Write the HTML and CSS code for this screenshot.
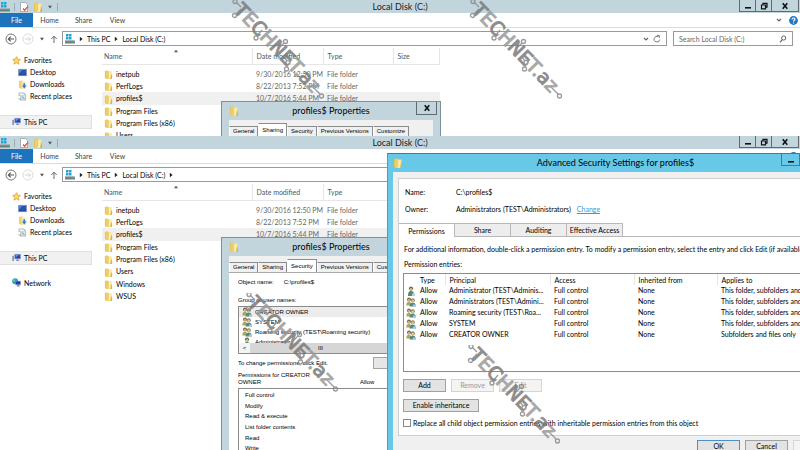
FILE: index.html
```html
<!DOCTYPE html>
<html lang="en">
<head>
<meta charset="utf-8">
<title>Local Disk (C:)</title>
<link rel="stylesheet" href="styles.css">
</head>
<body>
<svg class="defs" aria-hidden="true">
  <symbol id="drive" viewBox="0 0 10 10"><path fill="#1aa6d6" d="M1 0h2.500v2.500H1zM4 0h2.500v2.500H4zM1 3h2.500v2.500H1zM4 3h2.500v2.500H4z"/><path fill="#6f7d84" d="M0 6h9l1 1.500V9.500H0z"/><path fill="#aab5ba" d="M0 6h9l1 1.300H0z"/><path fill="#39c46a" d="M7.500 8h1.500v.8H7.500z"/></symbol>
  <symbol id="folder" viewBox="0 0 10 10"><path fill="#e3c35c" d="M1 1l3-.8V10L1 9z"/><path fill="#f8e49c" d="M4 1.500h4.500V10H4z"/><path fill="#eccf6c" d="M2 1h3.500v8L4 10H2z"/><path fill="#fff6cf" d="M5.500 2.500h1V9h-1z"/><path fill="#d9b548" d="M8 5h1v5H7z"/></symbol>
  <symbol id="page" viewBox="0 0 10 10"><path fill="#fff" stroke="#8d979b" stroke-width=".7" d="M1.500.5h5l2 2v7h-7z"/><path fill="none" stroke="#d8553c" stroke-width="1.300" d="M4 6.500l1.600 1.700L9 4.500"/></symbol>
  <symbol id="star" viewBox="0 0 10 10"><path fill="#ffd665" stroke="#df9a2b" stroke-width=".8" d="M5 .7l1.300 2.800 3.100.4-2.300 2.100.6 3.100L5 7.600 2.300 9.100l.6-3.100L.6 3.900l3.100-.4z"/></symbol>
  <symbol id="desktop" viewBox="0 0 10 10"><path fill="#2b56a8" stroke="#7f98c4" stroke-width=".7" d="M.5 1.500h9v7h-9z"/><path fill="#4e8ad4" d="M1 2h4L1 6z"/><path fill="#1b3f80" d="M1 7.300h8V8H1z"/></symbol>
  <symbol id="down" viewBox="0 0 10 10"><path fill="#ecd17a" d="M1 1l4-.8V10L1 9z"/><path fill="#f8e7ae" d="M4 1.500h4V10H4z"/><path fill="#2f7fc9" d="M6 3.500h2V6h1.700L7 9.500 4.300 6H6z"/></symbol>
  <symbol id="recent" viewBox="0 0 10 10"><path fill="#eef3f6" stroke="#8e9da8" stroke-width=".7" d="M1 1h6v2h1.500v6H3V4H1z"/><path stroke="#7f93a3" stroke-width=".7" d="M4 4.500h3M4 6h3M4 7.500h4"/><path fill="none" stroke="#5d7c96" d="M1 7l2 2"/></symbol>
  <symbol id="pc" viewBox="0 0 10 10"><path fill="#2544b0" stroke="#95a5cf" stroke-width=".7" d="M3 1.500h6.500v5H3z"/><path fill="#6e88dc" d="M4 2h4L4 5z"/><path fill="#8c97ad" d="M.3 3h1.900v6H.3zM5 7h2l1.500 2h-4z"/></symbol>
  <symbol id="network" viewBox="0 0 10 10"><circle cx="3.500" cy="3.500" r="3.300" fill="#2c97c9"/><path fill="#6fce86" d="M2 1l2 1-1 2-2 0zM4 4l2 0-1 2z"/><path fill="#1e3fa4" stroke="#8796c4" stroke-width=".6" d="M4 3.500h5.500v4H4z"/><path fill="#8290ad" d="M6 7.500h2l.8 2H5z"/></symbol>
  <symbol id="user" viewBox="0 0 10 10"><circle cx="5" cy="2.600" r="2.100" fill="#7b6a45"/><circle cx="5" cy="3.300" r="1.300" fill="#d5b78a"/><path fill="#4f8b76" d="M2 10c0-4 1-5 3-5s3 1 3 5z"/><path fill="#b9cfdf" d="M6 7.500h3V10H6z"/></symbol>
  <symbol id="users" viewBox="0 0 10 10"><circle cx="3" cy="2.500" r="2" fill="#7d6b42"/><circle cx="3" cy="3" r="1.100" fill="#ddc08f"/><circle cx="6.800" cy="3.200" r="2" fill="#93804f"/><circle cx="6.800" cy="3.700" r="1.200" fill="#e3c99b"/><path fill="#b3a258" d="M.3 8.500C.3 5.500 1.300 4.700 3 4.700s2 1 2 3.800z"/><path fill="#508c84" d="M3.500 9.600c0-3 1.300-4 3.200-4s3 1 3 4z"/><path fill="#a9cbe6" d="M7 7.500h2.800V10H7z"/></symbol>
  <symbol id="back" viewBox="0 0 12 12"><circle cx="6" cy="6" r="5" fill="#fff" stroke="#777"/><path fill="none" stroke="#555" stroke-width="1.200" d="M9 6H3.500M5.700 3.700L3.400 6l2.300 2.300"/></symbol>
  <symbol id="forward" viewBox="0 0 12 12"><circle cx="6" cy="6" r="5" fill="#fff" stroke="#dcdcdc"/><path fill="none" stroke="#d5d5d5" d="M3 6h5.500M6.300 3.700L8.600 6 6.300 8.300"/></symbol>
  <symbol id="up" viewBox="0 0 8 8"><path fill="none" stroke="#666" d="M4 8V1.200M1.300 4L4 1.200 6.700 4"/></symbol>
  <symbol id="tri-right" viewBox="0 0 4 6"><path fill="#222" d="M.8.8L3.600 3 .8 5.200z"/></symbol>
  <symbol id="tri-down" viewBox="0 0 6 4"><path fill="#555" d="M1 .8h4L3 3.500z"/></symbol>
  <symbol id="tri-up" viewBox="0 0 6 4"><path fill="#555" d="M1 3.200h4L3 .8z"/></symbol>
  <symbol id="chevron" viewBox="0 0 6 6"><path fill="none" stroke="#666" stroke-width="1.200" d="M1 2l2 2 2-2"/></symbol>
  <symbol id="refresh" viewBox="0 0 8 8"><path fill="none" stroke="#777" d="M6.700 4.600A2.800 2.800 0 1 1 5.300 1.700M4 .6h2.300v2.300"/></symbol>
  <symbol id="search" viewBox="0 0 8 8"><circle cx="4.700" cy="3" r="2.100" fill="none" stroke="#666"/><path stroke="#666" stroke-width="1.200" d="M3.300 4.700L1 7.300"/></symbol>
  <symbol id="help" viewBox="0 0 9 9"><circle cx="4.500" cy="4.500" r="4.400" fill="#1f78c1"/><path fill="none" stroke="#fff" stroke-width="1.100" d="M3 3.500c0-2 3-2 3-.2 0 1-1.500 1-1.500 2.200M4.500 6.500v1"/></symbol>
  <symbol id="min" viewBox="0 0 8 8"><path stroke="#111" stroke-width="1.600" d="M1 5.800h6"/></symbol>
  <symbol id="restore" viewBox="0 0 8 8"><path fill="none" stroke="#111" stroke-width="1.200" d="M1.500 3h4v3.800h-4zM3 3V1.300h4v3.800H5.600"/></symbol>
  <symbol id="close" viewBox="0 0 8 8"><path stroke="#111" stroke-width="1.600" d="M1.700 1.300l4.600 5.400M6.300 1.300L1.700 6.700"/></symbol>
  <symbol id="stamp" viewBox="0 0 100 108">
    <g fill="none" stroke="#8a8a8a" stroke-width="1.300">
      <path d="M6 2l5 5M6 14l5-5M27 36l5-6M54 43l-5 5M57 61l-3-4M57 67l4-7M90 94l-8-8"/>
      <circle cx="5" cy="1.500" r="2"/><circle cx="4.500" cy="15.500" r="2"/><circle cx="26" cy="38" r="2"/><circle cx="55.500" cy="41.500" r="2"/><circle cx="58" cy="62.500" r="2"/><circle cx="56.500" cy="69" r="2"/><circle cx="91.500" cy="96" r="2"/>
    </g>
    <text class="stamp-text" transform="translate(3 11) rotate(46)">T<tspan class="pale">E</tspan>C<tspan class="pale">H</tspan>NE<tspan class="pale">T.</tspan>a<tspan class="pale">z</tspan></text>
  </symbol>
</svg>

<main class="desktop">
  <section class="window">
    <header class="titlebar">
      <div class="quick"><svg class="i10"><use href="#drive"/></svg><span class="rule"></span><svg class="i10"><use href="#page"/></svg><svg class="i10"><use href="#folder"/></svg><svg class="i6"><use href="#tri-down"/></svg><span class="rule"></span></div>
      <h1>Local Disk (C:)</h1>
      <div class="controls"><button aria-label="Minimize"><svg class="i8"><use href="#min"/></svg></button><button aria-label="Restore"><svg class="i8"><use href="#restore"/></svg></button><button class="wide" aria-label="Close"><svg class="i8"><use href="#close"/></svg></button></div>
    </header>
    <nav class="ribbon"><button class="file">File</button><button>Home</button><button>Share</button><button>View</button><span class="grow"></span><svg class="i6"><use href="#chevron"/></svg><svg class="i9"><use href="#help"/></svg></nav>
    <div class="address">
      <div class="arrows"><svg class="i12"><use href="#back"/></svg><svg class="i12"><use href="#forward"/></svg><svg class="i6"><use href="#tri-down"/></svg><svg class="i8"><use href="#up"/></svg></div>
      <div class="crumbs"><svg class="i10"><use href="#drive"/></svg><svg class="sep"><use href="#tri-right"/></svg><a href="#pc">This PC</a><svg class="sep"><use href="#tri-right"/></svg><a href="#c">Local Disk (C:)</a><span class="grow"></span><svg class="i6"><use href="#chevron"/></svg><svg class="i8"><use href="#refresh"/></svg></div>
      <div class="search"><input type="text" aria-label="Search Local Disk (C:)" placeholder="Search Local Disk (C:)"><svg class="i8"><use href="#search"/></svg></div>
    </div>
    <div class="content">
      <ul class="tree">
        <li><svg class="i9"><use href="#star"/></svg>Favorites</li>
        <li class="child"><svg class="i9"><use href="#desktop"/></svg>Desktop</li>
        <li class="child"><svg class="i9"><use href="#down"/></svg>Downloads</li>
        <li class="child"><svg class="i9"><use href="#recent"/></svg>Recent places</li>
        <li class="pc current"><svg class="i9"><use href="#pc"/></svg>This PC</li>
      </ul>
      <div class="listing">
        <svg class="sort"><use href="#tri-up"/></svg>
        <table class="files">
          <thead><tr><th class="c-name">Name</th><th class="c-date">Date modified</th><th class="c-type">Type</th><th class="c-size">Size</th></tr></thead>
          <tbody>
            <tr><td><svg class="i9"><use href="#folder"/></svg>inetpub</td><td>9/30/2016 12:50 PM</td><td>File folder</td><td></td></tr>
            <tr><td><svg class="i9"><use href="#folder"/></svg>PerfLogs</td><td>8/22/2013 7:52 PM</td><td>File folder</td><td></td></tr>
            <tr class="selected"><td><svg class="i9"><use href="#folder"/></svg>profiles$</td><td>10/7/2016 5:44 PM</td><td>File folder</td><td></td></tr>
            <tr><td><svg class="i9"><use href="#folder"/></svg>Program Files</td><td></td><td></td><td></td></tr>
            <tr><td><svg class="i9"><use href="#folder"/></svg>Program Files (x86)</td><td></td><td></td><td></td></tr>
            <tr><td><svg class="i9"><use href="#folder"/></svg>Users</td><td></td><td></td><td></td></tr>
          </tbody>
        </table>
      </div>
    </div>
    <section class="dialog props">
      <header><svg class="i10"><use href="#folder"/></svg><h2>profiles$ Properties</h2><button aria-label="Close"><svg class="i8"><use href="#close"/></svg></button></header>
      <div class="props-body">
        <div class="tabs"><button>General</button><button class="on">Sharing</button><button>Security</button><button>Previous Versions</button><button>Customize</button></div>
        <div class="pane"></div>
      </div>
    </section>
    <svg class="stamp stamp-left"><use href="#stamp"/></svg>
    <svg class="stamp stamp-right"><use href="#stamp"/></svg>
  </section>

  <section class="window">
    <header class="titlebar">
      <div class="quick"><svg class="i10"><use href="#drive"/></svg><span class="rule"></span><svg class="i10"><use href="#page"/></svg><svg class="i10"><use href="#folder"/></svg><svg class="i6"><use href="#tri-down"/></svg><span class="rule"></span></div>
      <h1>Local Disk (C:)</h1>
      <div class="controls"><button aria-label="Minimize"><svg class="i8"><use href="#min"/></svg></button><button aria-label="Restore"><svg class="i8"><use href="#restore"/></svg></button><button class="wide" aria-label="Close"><svg class="i8"><use href="#close"/></svg></button></div>
    </header>
    <nav class="ribbon"><button class="file">File</button><button>Home</button><button>Share</button><button>View</button><span class="grow"></span><svg class="i9"><use href="#help"/></svg></nav>
    <div class="address">
      <div class="arrows"><svg class="i12"><use href="#back"/></svg><svg class="i12"><use href="#forward"/></svg><svg class="i6"><use href="#tri-down"/></svg><svg class="i8"><use href="#up"/></svg></div>
      <div class="crumbs"><svg class="i10"><use href="#drive"/></svg><svg class="sep"><use href="#tri-right"/></svg><a href="#pc">This PC</a><svg class="sep"><use href="#tri-right"/></svg><a href="#c">Local Disk (C:)</a><svg class="sep"><use href="#tri-right"/></svg></div>
    </div>
    <div class="content">
      <ul class="tree">
        <li><svg class="i9"><use href="#star"/></svg>Favorites</li>
        <li class="child"><svg class="i9"><use href="#desktop"/></svg>Desktop</li>
        <li class="child"><svg class="i9"><use href="#down"/></svg>Downloads</li>
        <li class="child"><svg class="i9"><use href="#recent"/></svg>Recent places</li>
        <li class="pc current"><svg class="i9"><use href="#pc"/></svg>This PC</li>
        <li class="net"><svg class="i9"><use href="#network"/></svg>Network</li>
      </ul>
      <div class="listing">
        <svg class="sort"><use href="#tri-up"/></svg>
        <table class="files">
          <thead><tr><th class="c-name">Name</th><th class="c-date">Date modified</th><th class="c-type">Type</th><th class="c-size"></th></tr></thead>
          <tbody>
            <tr><td><svg class="i9"><use href="#folder"/></svg>inetpub</td><td>9/30/2016 12:50 PM</td><td>File folder</td><td></td></tr>
            <tr><td><svg class="i9"><use href="#folder"/></svg>PerfLogs</td><td>8/22/2013 7:52 PM</td><td>File folder</td><td></td></tr>
            <tr class="selected"><td><svg class="i9"><use href="#folder"/></svg>profiles$</td><td>10/7/2016 5:44 PM</td><td>File folder</td><td></td></tr>
            <tr><td><svg class="i9"><use href="#folder"/></svg>Program Files</td><td></td><td></td><td></td></tr>
            <tr><td><svg class="i9"><use href="#folder"/></svg>Program Files (x86)</td><td></td><td></td><td></td></tr>
            <tr><td><svg class="i9"><use href="#folder"/></svg>Users</td><td></td><td></td><td></td></tr>
            <tr><td><svg class="i9"><use href="#folder"/></svg>Windows</td><td></td><td></td><td></td></tr>
            <tr><td><svg class="i9"><use href="#folder"/></svg>WSUS</td><td></td><td></td><td></td></tr>
          </tbody>
        </table>
      </div>
    </div>

    <section class="dialog props">
      <header><svg class="i10"><use href="#folder"/></svg><h2>profiles$ Properties</h2></header>
      <div class="props-body">
        <div class="tabs"><button>General</button><button>Sharing</button><button class="on">Security</button><button>Previous Versions</button><button>Customize</button></div>
        <div class="pane">
          <p class="object"><span>Object name:</span><span>C:\profiles$</span></p>
          <p class="group">Group or user names:</p>
          <div class="principals">
            <ul>
              <li class="selected"><svg class="i10"><use href="#users"/></svg>CREATOR OWNER</li>
              <li><svg class="i10"><use href="#users"/></svg>SYSTEM</li>
              <li><svg class="i10"><use href="#users"/></svg>Roaming security (TEST\Roaming security)</li>
              <li><svg class="i10"><use href="#user"/></svg>Administrator</li>
            </ul>
            <div class="hscroll"><span class="less">&lt;</span><span class="thumb">III</span></div>
          </div>
          <div class="change"><span>To change permissions, click Edit.</span><button aria-label="Edit permissions"></button></div>
          <div class="perm-head"><span>Permissions for CREATOR OWNER</span><span>Allow</span></div>
          <ul class="perms"><li>Full control</li><li>Modify</li><li>Read &amp; execute</li><li>List folder contents</li><li>Read</li><li>Write</li></ul>
        </div>
      </div>
    </section>

    <section class="dialog advanced">
      <header><svg class="i10"><use href="#folder"/></svg><h2>Advanced Security Settings for profiles$</h2><button aria-label="Minimize"><svg class="i8"><use href="#min"/></svg></button></header>
      <div class="adv-body">
        <div class="sheet">
          <dl><dt>Name:</dt><dd>C:\profiles$</dd><dt>Owner:</dt><dd>Administrators (TEST\Administrators)<a href="#change">Change</a></dd></dl>
          <div class="adv-tabs"><button class="on">Permissions</button><button>Share</button><button>Auditing</button><button>Effective Access</button></div>
          <div class="adv-pane">
            <p>For additional information, double-click a permission entry. To modify a permission entry, select the entry and click Edit (if available).</p>
            <p>Permission entries:</p>
            <div class="entries">
              <table>
                <thead><tr><th class="e-icon"></th><th class="e-type">Type</th><th class="e-who">Principal</th><th class="e-acc">Access</th><th class="e-inh">Inherited from</th><th>Applies to</th></tr></thead>
                <tbody>
                  <tr><td><svg class="i10"><use href="#user"/></svg></td><td>Allow</td><td>Administrator (TEST\Adminis...</td><td>Full control</td><td>None</td><td>This folder, subfolders and files</td></tr>
                  <tr><td><svg class="i10"><use href="#users"/></svg></td><td>Allow</td><td>Administrators (TEST\Admini...</td><td>Full control</td><td>None</td><td>This folder, subfolders and files</td></tr>
                  <tr><td><svg class="i10"><use href="#users"/></svg></td><td>Allow</td><td>Roaming security (TEST\Roa...</td><td>Full control</td><td>None</td><td>This folder, subfolders and files</td></tr>
                  <tr><td><svg class="i10"><use href="#users"/></svg></td><td>Allow</td><td>SYSTEM</td><td>Full control</td><td>None</td><td>This folder, subfolders and files</td></tr>
                  <tr><td><svg class="i10"><use href="#users"/></svg></td><td>Allow</td><td>CREATOR OWNER</td><td>Full control</td><td>None</td><td>Subfolders and files only</td></tr>
                </tbody>
              </table>
            </div>
            <div class="actions"><button>Add</button><button disabled>Remove</button><button disabled>Edit</button></div>
            <div class="actions"><button class="inherit">Enable inheritance</button></div>
            <label class="replace"><input type="checkbox">Replace all child object permission entries with inheritable permission entries from this object</label>
          </div>
        </div>
        <footer class="actions"><button class="default">OK</button><button>Cancel</button><button disabled aria-label="Apply"></button></footer>
      </div>
    </section>
    <svg class="stamp stamp-low-left"><use href="#stamp"/></svg>
    <svg class="stamp stamp-low-right"><use href="#stamp"/></svg>
  </section>
</main>
</body>
</html>
```

FILE: styles.css
```css
* { box-sizing: border-box; }
body, h1, h2, p, ul, dl, dd { margin: 0; padding: 0; }
ul { list-style: none; }
body { font: 7px/12px Lato, "Open Sans", sans-serif; color: #000; background: #fff; }
button { font: inherit; color: inherit; margin: 0; padding: 0; border: 0; background: none; }
a { color: inherit; text-decoration: none; }
svg { flex: none; }
.defs { position: absolute; width: 0; height: 0; }
.grow { flex: 1; }
.i6 { width: 6px; height: 6px; }
.i8 { width: 8px; height: 8px; }
.i9 { width: 9px; height: 9px; }
.i10 { width: 10px; height: 10px; }
.i12 { width: 12px; height: 12px; }

.desktop { display: grid; grid-template-rows: 136px 1fr; height: 100vh; overflow: hidden; }
.window { position: relative; overflow: hidden; background: #fff; min-width: 0; }

.titlebar { display: grid; grid-template-columns: 1fr auto 1fr; height: 13px; background: #c2d5dc; }
.quick { display: flex; align-items: center; gap: 4px; }
.quick .rule { width: 1px; height: 8px; background: #98a9b0; }
.titlebar h1 { font-size: 9px; font-weight: 400; line-height: 13px; color: #222; }
.controls { display: flex; justify-content: flex-end; padding-right: 1px; }
.controls button { display: flex; align-items: center; justify-content: center; width: 16px; height: 12px; border: 1px solid #5d6a70; border-top: 0; border-right: 0; }
.controls .wide { width: 28px; border-right: 1px solid #5d6a70; }

.ribbon { display: flex; align-items: center; height: 15px; padding-right: 2px; gap: 7px; border-bottom: 1px solid #dcdcdc; color: #444; }
.ribbon button { width: 27px; height: 14px; }
.ribbon .file { width: 33px; margin-right: -4px; background: #1d74bd; color: #fff; }

.address { display: flex; gap: 6px; height: 20px; padding: 3px 7px 2px 5px; }
.arrows { display: flex; align-items: center; gap: 5px; width: 51px; }
.crumbs { display: flex; align-items: center; flex: 1; gap: 4px; padding: 0 5px 0 2px; border: 1px solid #9a9a9a; }
.sep { width: 4px; height: 6px; }
.search { display: flex; align-items: center; width: 120px; padding: 0 5px; border: 1px solid #9a9a9a; }
.search input { flex: 1; min-width: 0; padding: 0; border: 0; outline: 0; background: none; font: inherit; }
.search input::placeholder { color: #666; opacity: 1; }

.content { display: flex; }
.tree { display: grid; grid-template-rows: repeat(8, 1fr); height: 99px; width: 92px; margin-top: 6px; flex: none; }
.tree li { display: flex; align-items: center; gap: 3px; padding-left: 12px; }
.tree .child { padding-left: 18px; }
.tree .pc { grid-row: 6; }
.tree .net { grid-row: 8; }
.current { background: #f1f1f1; border: 1px solid #e0e0e0; border-left: 0; }
.listing { position: relative; flex: 1; padding-left: 10px; }
.sort { position: absolute; left: 81px; top: 1px; width: 6px; height: 4px; }
.files { width: 338px; border-collapse: collapse; table-layout: fixed; }
.files th { height: 16px; padding: 1px 0 0 4px; text-align: left; font-weight: 400; color: #4c5663; border-right: 1px solid #e6e6e6; border-bottom: 1px solid #e6e6e6; }
.c-name { width: 150px; }
.c-date { width: 71px; }
.c-type { width: 70px; }
.files tbody::before { content: ""; display: block; height: 3px; }
.files td { height: 12px; padding: 0 0 0 4px; white-space: nowrap; color: #666; }
.files tr:nth-child(3n) td { height: 13px; }
.files td:first-child { padding-left: 2px; color: #000; }
.files th:first-child { padding-left: 2px; }
.files td svg { vertical-align: middle; margin-right: 3px; }
.files .selected { background: #f0f0f0; }

.dialog { position: absolute; }
.dialog header { display: flex; align-items: center; }
.dialog h2 { flex: 1; font-weight: 400; text-align: center; }
.dialog header button { display: flex; align-items: center; justify-content: center; align-self: flex-start; }

.props { left: 221px; top: 101px; width: 220px; padding: 0 7px; background: #c2d5dc; border: 1px solid #7f9098; font-family: "Liberation Sans", sans-serif; font-size: 6px; }
.props header { height: 18px; font-family: Lato, "Open Sans", sans-serif; }
.props h2 { font-size: 9px; padding-right: 10px; }
.props header button { width: 21px; height: 13px; margin: 0 -4px 0 -17px; border: 1px solid #5d6a70; border-top: 0; }
.props-body { background: #f0f0f0; padding-top: 3px; }
.tabs { display: flex; align-items: flex-end; height: 13px; }
.tabs button { height: 10px; padding: 0 3px; line-height: 9px; border: 1px solid #8c8c8c; border-left-color: #fff; border-bottom: 0; white-space: nowrap; }
.tabs .on { height: 13px; line-height: 11px; background: #fff; }
.pane { min-height: 8px; padding: 4px 9px; background: #fff; border-top: 1px solid #aaa; }
.object { display: flex; gap: 10px; line-height: 10px; }
.group { padding: 8px 0 1px; line-height: 10px; }
.principals { border: 1px solid #8b8b8b; overflow: hidden; }
.principals ul { height: 36px; overflow: hidden; }
.principals li { display: flex; align-items: center; gap: 3px; height: 10px; padding-left: 3px; white-space: nowrap; }
.principals .selected { background: #ececec; }
.hscroll { display: flex; height: 10px; line-height: 10px; background: #d6d6d6; }
.less { width: 11px; text-align: center; background: #f4f4f4; }
.thumb { flex: 1; text-align: center; padding-right: 32px; }
.change { display: flex; justify-content: space-between; align-items: center; height: 18px; }
.change button { width: 51px; height: 12px; background: #e6e6e6; border: 1px solid #a5a5a5; }
.perm-head { display: flex; align-items: flex-end; line-height: 7px; }
.perm-head span:first-child { width: 122px; padding-right: 36px; }
.perms { display: grid; grid-template-rows: repeat(6, 1fr); height: 68px; margin-top: 2px; padding: 1px 6px; border: 1px solid #8b8b8b; }
.perms li { line-height: 10px; }

.advanced { left: 387px; right: -75px; top: 17px; padding: 0 5px; background: #67c8e8; border-top: 1px solid #3f7d93; border-left: 1px solid #4a9dbb; }
.advanced header { height: 18px; padding-right: 70px; }
.advanced h2 { font-size: 9px; padding-left: 28px; }
.advanced header button { width: 19px; height: 12px; border: 1px solid #3f7d93; border-top: 0; margin-left: -19px; }
.adv-body { padding: 6px 5px 0; background: #f0f0f0; }
.sheet { background: #fff; border: 1px solid #cfcfcf; }
dl { display: grid; grid-template-columns: 51px 1fr; row-gap: 5px; padding: 7px 6px 0; }
dt, dd { line-height: 12px; }
dd a { margin-left: 6px; color: #3a9ad0; text-decoration: underline; }
.adv-tabs { display: flex; margin-top: 8px; border-bottom: 1px solid #b9b9b9; }
.adv-tabs button { width: 56px; height: 13px; background: #ededed; border: 1px solid #b9b9b9; border-left: 0; border-bottom: 0; white-space: nowrap; }
.adv-tabs .on { background: #fff; margin-bottom: -1px; height: 14px; }
.adv-pane { padding: 6px 4px; }
.adv-pane p { line-height: 12px; margin-bottom: 3px; padding-left: 1px; white-space: nowrap; }
.entries { height: 99px; border: 1px solid #8b8b8b; }
.entries table { width: 100%; border-collapse: collapse; table-layout: fixed; }
.entries th { height: 11px; padding: 0 0 0 4px; line-height: 10px; text-align: left; font-weight: 400; border-right: 1px solid #e4e4e4; }
.entries td { height: 11px; padding: 0 0 0 4px; line-height: 11px; white-space: nowrap; }
.entries td:first-child { padding-left: 2px; }
.entries td svg { display: block; }
.e-icon { width: 12px; }
.entries .e-icon { border-right: 0; }
.e-type { width: 29px; }
.e-who { width: 105px; }
.e-acc { width: 84px; }
.e-inh { width: 83px; }
.actions { display: flex; gap: 5px; padding-top: 7px; }
.actions button { width: 43px; height: 13px; line-height: 11px; background: #e3e3e3; border: 1px solid #a0a0a0; }
.actions button:disabled { background: #f4f4f4; border-color: #d5d5d5; color: #999; }
.actions .inherit { width: 76px; }
.actions .default { border-color: #4a90c8; }
.replace { display: flex; align-items: center; gap: 2px; margin-top: 5px; white-space: nowrap; }
.replace input { appearance: none; width: 8px; height: 8px; margin: 0; border: 1px solid #888; background: #fff; }
footer.actions { height: 30px; padding: 4px 0 0 299px; }

.stamp { position: absolute; width: 100px; height: 108px; opacity: 0.85; pointer-events: none; }
.stamp-text { font: 400 19px "DejaVu Sans", sans-serif; fill: #7a7a7a; stroke: #7a7a7a; stroke-width: 1px; }
.stamp-text .pale { fill: #999; stroke: #999; }
.stamp-left { left: 230px; top: 0; }
.stamp-right { left: 468px; top: 0; }
.stamp-low-left { left: 244px; top: 157px; }
.stamp-low-right { left: 466px; top: 209px; }
```
